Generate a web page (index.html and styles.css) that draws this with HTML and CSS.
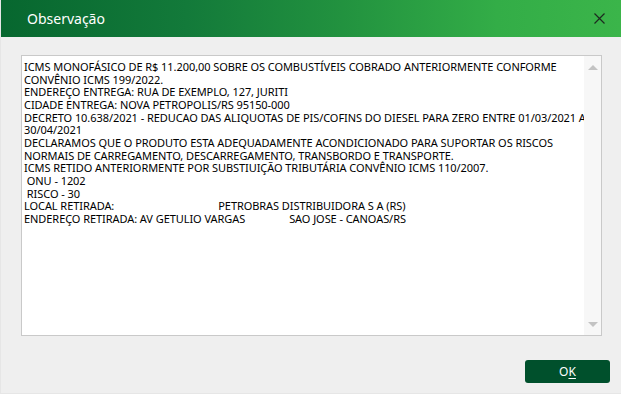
FILE: index.html
```html
<!DOCTYPE html>
<html lang="pt-BR">
<head>
<meta charset="utf-8">
<title>Observação</title>
<link rel="stylesheet" href="styles.css">
</head>
<body>
<div class="dialog">
  <div class="titlebar">
    <span class="title">Observação</span>
    <span class="close" aria-label="Fechar">
      <svg width="11" height="11" viewBox="0 0 11 11"><path d="M0.5 0.5 L10.5 10.5 M10.5 0.5 L0.5 10.5" stroke="#1d2a1f" stroke-width="1.2" fill="none"/></svg>
    </span>
  </div>
  <div class="content">
    <div class="memo">
      <div class="memo-text">ICMS MONOFÁSICO DE R$ 11.200,00 SOBRE OS COMBUSTÍVEIS COBRADO ANTERIORMENTE CONFORME
CONVÊNIO ICMS 199/2022.
ENDEREÇO ENTREGA: RUA DE EXEMPLO, 127, JURITI
CIDADE ENTREGA: NOVA PETROPOLIS/RS 95150-000
DECRETO 10.638/2021 - REDUCAO DAS ALIQUOTAS DE PIS/COFINS DO DIESEL PARA ZERO ENTRE 01/03/2021 A
30/04/2021
DECLARAMOS QUE O PRODUTO ESTA ADEQUADAMENTE ACONDICIONADO PARA SUPORTAR OS RISCOS
NORMAIS DE CARREGAMENTO, DESCARREGAMENTO, TRANSBORDO E TRANSPORTE.
ICMS RETIDO ANTERIORMENTE POR SUBSTIUIÇÃO TRIBUTÁRIA CONVÊNIO ICMS 110/2007.
 ONU - 1202
 RISCO - 30
LOCAL RETIRADA:<span class="tab t1"></span>PETROBRAS DISTRIBUIDORA S A (RS)
ENDEREÇO RETIRADA: AV GETULIO VARGAS<span class="tab t2"></span>SAO JOSE - CANOAS/RS</div>
      <div class="scrollbar">
        <span class="arrow up"></span>
        <span class="arrow down"></span>
      </div>
    </div>
    <div class="actions">
      <button class="btn-ok" type="button">O<u>K</u></button>
    </div>
  </div>
</div>
</body>
</html>
```

FILE: styles.css
```css
html, body {
  margin: 0;
  padding: 0;
  background: #ffffff;
}

.dialog {
  width: 621px;
  height: 394px;
  background: #efefef;
  display: flex;
  flex-direction: column;
  box-sizing: border-box;
  border-left: 1px solid #e6e6e6;
  border-bottom: 1px solid #e6e6e6;
  font-family: "Noto Sans", "Open Sans", sans-serif;
}

.titlebar {
  height: 37px;
  flex: none;
  display: flex;
  align-items: center;
  justify-content: space-between;
  background: linear-gradient(90deg, #07672f 0%, #137a3a 30%, #22923f 55%, #33ad47 80%, #3bb54a 100%);
}

.title {
  color: #ffffff;
  font-size: 14px;
  padding-left: 26px;
  margin-top: -1px;
}

.close {
  width: 11px;
  height: 11px;
  margin-right: 16px;
  display: flex;
}

.content {
  flex: 1;
  display: flex;
  flex-direction: column;
  padding: 18px 19px 0 20px;
}

.memo {
  height: 281px;
  box-sizing: border-box;
  border: 1px solid #c9c9c9;
  background: #ffffff;
  display: flex;
}

.memo-text {
  flex: 1;
  white-space: pre;
  font-size: 11px;
  line-height: 12.67px;
  letter-spacing: -0.065px;
  color: #000000;
  padding: 5px 0 0 2px;
  overflow: hidden;
}

.tab {
  display: inline-block;
}
.t1 { width: 104px; }
.t2 { width: 44px; }

.scrollbar {
  width: 17px;
  flex: none;
  background: #f7f7f7;
  display: flex;
  flex-direction: column;
  justify-content: space-between;
  align-items: center;
  padding: 9px 0 8px;
}

.arrow {
  width: 0;
  height: 0;
  border-left: 5px solid transparent;
  border-right: 5px solid transparent;
}
.arrow.up { border-bottom: 5px solid #c3c3c3; }
.arrow.down { border-top: 5px solid #c3c3c3; }

.actions {
  display: flex;
  justify-content: flex-end;
  padding-top: 24px;
  padding-right: 0;
}

.btn-ok {
  width: 85px;
  height: 23px;
  margin-right: -8px;
  border: none;
  border-radius: 3px;
  background: #00502c;
  color: #ffffff;
  font-family: "Noto Sans", "Open Sans", sans-serif;
  font-size: 12px;
  padding: 0;
}
.btn-ok u {
  text-underline-offset: 2px;
}
```
